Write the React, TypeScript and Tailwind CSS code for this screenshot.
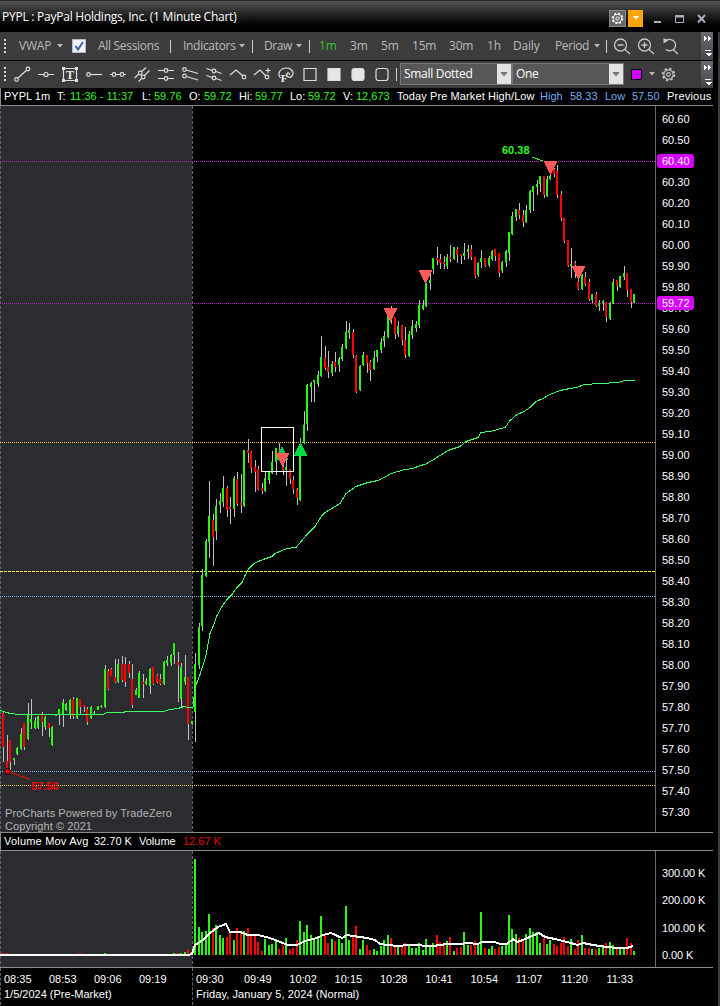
import type { ReactNode } from 'react';
import clsx from 'clsx';

// x, high, low, body top, body bottom, direction, volume height
type Bar = [number, number, number, number, number, 'u' | 'd', number];

const preMarket: Bar[] = [
  [2, 712, 762, 713, 747, 'd', 2], [6, 735, 772, 761, 769, 'd', 2], [9, 740, 770, 740, 762, 'd', 0],
  [13, 758, 765, 758, 760, 'u', 0], [16, 747, 755, 748, 754, 'u', 0], [20, 728, 750, 734, 749, 'u', 0],
  [23, 723, 750, 723, 747, 'd', 0], [27, 703, 740, 715, 739, 'u', 0], [30, 699, 729, 719, 722, 'u', 0],
  [34, 717, 729, 721, 728, 'u', 0], [37, 716, 729, 716, 728, 'u', 0], [41, 712, 736, 715, 722, 'd', 0],
  [44, 716, 730, 717, 727, 'u', 0], [48, 723, 737, 723, 728, 'd', 0], [51, 726, 746, 727, 745, 'u', 0],
  [55, 715, 716, 715, 716, 'u', 0], [58, 709, 725, 709, 715, 'u', 0], [62, 699, 727, 702, 715, 'u', 0],
  [65, 703, 711, 704, 710, 'u', 0], [69, 699, 719, 700, 714, 'u', 0], [72, 697, 719, 699, 716, 'd', 0],
  [76, 698, 719, 698, 718, 'u', 0], [79, 699, 715, 699, 707, 'd', 2], [83, 705, 712, 705, 707, 'd', 0],
  [86, 707, 725, 709, 722, 'd', 0], [90, 706, 719, 707, 718, 'u', 0], [93, 711, 714, 712, 713, 'u', 0],
  [97, 706, 710, 706, 710, 'u', 0], [100, 705, 708, 706, 707, 'u', 0], [104, 665, 708, 669, 707, 'u', 2],
  [107, 669, 690, 671, 689, 'd', 0], [110, 668, 676, 669, 676, 'd', 0], [114, 659, 683, 677, 682, 'd', 0],
  [117, 659, 683, 664, 682, 'u', 0], [121, 656, 682, 664, 680, 'd', 0], [124, 657, 687, 664, 682, 'd', 0],
  [128, 661, 678, 664, 673, 'd', 0], [131, 664, 708, 679, 705, 'd', 0], [135, 688, 695, 690, 695, 'u', 0],
  [138, 671, 698, 673, 698, 'u', 0], [142, 674, 698, 682, 684, 'd', 0], [145, 678, 685, 681, 684, 'u', 0],
  [149, 668, 694, 669, 686, 'u', 0], [152, 667, 685, 667, 684, 'd', 0], [156, 674, 683, 675, 682, 'd', 0],
  [159, 674, 685, 679, 684, 'd', 0], [163, 661, 685, 662, 684, 'u', 0], [166, 656, 666, 660, 663, 'u', 0],
  [170, 654, 666, 655, 663, 'u', 0], [173, 643, 664, 643, 655, 'u', 2], [177, 652, 702, 662, 665, 'd', 2],
  [180, 663, 707, 667, 699, 'u', 2], [184, 655, 685, 677, 682, 'u', 3], [187, 677, 740, 677, 724, 'd', 6],
  [191, 721, 725, 721, 724, 'u', 0],
];

const regular: Bar[] = [
  [194, 653, 742, 664, 712, 'u', 96], [198, 623, 669, 627, 665, 'u', 28], [201, 569, 631, 575, 626, 'u', 23],
  [205, 539, 577, 541, 576, 'u', 24], [208, 481, 558, 516, 542, 'u', 41], [212, 514, 566, 520, 537, 'd', 27],
  [215, 499, 540, 506, 531, 'u', 30], [219, 493, 513, 501, 505, 'u', 20], [222, 476, 507, 488, 502, 'u', 17],
  [226, 486, 517, 488, 510, 'd', 18], [229, 497, 524, 507, 509, 'd', 22], [233, 476, 517, 478, 509, 'u', 15],
  [236, 472, 506, 479, 504, 'd', 27], [240, 474, 513, 503, 505, 'd', 23], [243, 450, 507, 450, 506, 'u', 24],
  [247, 439, 463, 450, 453, 'd', 27], [250, 451, 473, 452, 468, 'd', 19], [254, 460, 492, 467, 472, 'd', 20],
  [257, 466, 490, 469, 489, 'd', 13], [261, 483, 494, 488, 491, 'd', 4], [264, 472, 492, 478, 491, 'u', 16],
  [268, 472, 484, 472, 480, 'u', 10], [271, 451, 474, 462, 473, 'u', 11], [275, 448, 475, 448, 462, 'u', 16],
  [278, 443, 453, 450, 453, 'd', 6], [282, 450, 475, 467, 470, 'd', 10], [285, 460, 486, 467, 470, 'u', 17],
  [289, 469, 484, 469, 479, 'd', 6], [292, 476, 494, 480, 489, 'd', 7], [296, 488, 505, 489, 498, 'd', 15],
  [299, 438, 501, 455, 500, 'u', 34], [303, 411, 444, 425, 443, 'u', 23], [306, 384, 431, 385, 424, 'u', 30],
  [310, 382, 402, 383, 387, 'u', 20], [313, 380, 402, 380, 382, 'u', 16], [317, 371, 387, 375, 384, 'u', 19],
  [320, 336, 377, 357, 376, 'u', 39], [324, 346, 370, 358, 368, 'd', 20], [327, 351, 378, 367, 372, 'd', 12],
  [331, 361, 376, 364, 373, 'u', 16], [334, 352, 372, 362, 367, 'd', 14], [338, 357, 372, 359, 365, 'u', 16],
  [341, 344, 361, 347, 359, 'u', 12], [345, 321, 349, 332, 348, 'u', 49], [348, 323, 339, 330, 333, 'u', 15],
  [352, 329, 358, 332, 355, 'd', 18], [355, 355, 393, 356, 392, 'd', 29], [359, 365, 391, 366, 390, 'u', 6],
  [362, 352, 366, 355, 365, 'u', 15], [366, 355, 373, 355, 363, 'd', 10], [369, 360, 381, 362, 370, 'd', 5],
  [373, 351, 370, 358, 369, 'u', 6], [376, 350, 362, 350, 357, 'u', 4], [380, 338, 353, 342, 350, 'u', 9],
  [383, 331, 347, 336, 341, 'u', 15], [387, 315, 338, 316, 337, 'u', 20], [390, 306, 324, 310, 316, 'd', 17],
  [394, 317, 339, 317, 334, 'd', 9], [397, 321, 337, 326, 334, 'u', 9], [401, 325, 345, 325, 340, 'd', 8],
  [404, 327, 358, 340, 355, 'd', 12], [408, 331, 357, 334, 356, 'u', 9], [411, 320, 339, 326, 335, 'u', 7],
  [415, 321, 332, 324, 328, 'u', 7], [418, 300, 328, 305, 325, 'u', 12], [422, 300, 310, 305, 309, 'u', 5],
  [425, 283, 307, 284, 306, 'u', 16], [429, 272, 290, 280, 283, 'u', 8], [432, 258, 274, 258, 269, 'u', 12],
  [436, 247, 265, 258, 260, 'd', 20], [439, 254, 269, 259, 263, 'd', 13], [443, 256, 269, 262, 264, 'd', 11],
  [446, 254, 269, 257, 266, 'u', 14], [449, 245, 262, 257, 259, 'd', 18], [453, 247, 260, 247, 259, 'u', 4],
  [456, 247, 263, 249, 255, 'd', 7], [460, 254, 264, 254, 256, 'd', 8], [463, 243, 260, 253, 256, 'u', 23],
  [467, 245, 259, 249, 252, 'u', 10], [470, 245, 260, 249, 257, 'd', 10], [474, 257, 278, 257, 276, 'd', 14],
  [477, 262, 277, 263, 275, 'u', 11], [480, 250, 268, 258, 262, 'u', 43], [484, 258, 267, 258, 266, 'd', 7],
  [488, 256, 267, 258, 265, 'u', 6], [491, 250, 261, 251, 259, 'u', 9], [494, 249, 261, 249, 256, 'd', 6],
  [498, 253, 277, 253, 273, 'd', 8], [501, 261, 273, 262, 271, 'u', 9], [505, 250, 267, 251, 262, 'u', 11],
  [508, 232, 261, 232, 253, 'u', 40], [511, 212, 235, 216, 234, 'u', 26], [515, 209, 221, 209, 217, 'u', 21],
  [518, 203, 219, 210, 215, 'd', 17], [522, 210, 227, 215, 222, 'd', 16], [525, 205, 223, 210, 222, 'u', 21],
  [529, 190, 213, 191, 210, 'u', 27], [532, 186, 211, 186, 192, 'u', 23], [536, 180, 195, 184, 187, 'u', 23],
  [539, 176, 192, 176, 184, 'u', 12], [543, 176, 198, 176, 195, 'd', 17], [546, 176, 197, 179, 196, 'u', 11],
  [549, 170, 180, 176, 179, 'u', 15], [553, 168, 177, 169, 174, 'd', 11], [556, 165, 198, 171, 195, 'd', 9],
  [560, 191, 221, 194, 218, 'd', 12], [563, 218, 243, 218, 241, 'd', 18], [567, 240, 267, 240, 266, 'd', 9],
  [570, 248, 278, 264, 266, 'u', 16], [574, 261, 278, 263, 265, 'd', 6], [577, 277, 290, 281, 289, 'd', 15],
  [581, 274, 290, 275, 289, 'u', 20], [584, 272, 286, 277, 284, 'd', 7], [588, 279, 301, 282, 299, 'd', 7],
  [591, 294, 303, 294, 300, 'u', 6], [595, 292, 307, 294, 306, 'd', 6], [598, 300, 311, 303, 306, 'u', 7],
  [602, 300, 311, 301, 303, 'u', 9], [605, 302, 322, 302, 317, 'd', 12], [609, 302, 320, 303, 319, 'u', 13],
  [612, 279, 304, 282, 303, 'u', 10], [616, 280, 291, 280, 286, 'd', 7], [619, 276, 288, 276, 287, 'u', 6],
  [623, 266, 280, 273, 277, 'u', 6], [626, 273, 297, 273, 290, 'd', 17], [630, 289, 308, 289, 302, 'd', 12],
  [633, 294, 303, 294, 303, 'u', 4],
];

const bars = [...preMarket, ...regular];

const vwap =
  '0,710 7,712 10,713 20,714 103,714 107,712 123,712 126,711 163,711 170,709 178,708 184,706 188,707 193,707 195,687 197,682 200,674 206,655 210,633 213,626 217,615 222,606 227,599 232,594 237,587 242,582 245,575 249,568 254,563 263,559 272,556 275,553 287,548 296,547 307,534 315,526 322,515 325,512 340,503 346,493 356,486 368,482 378,480 386,476 391,473 405,469 413,468 420,465 425,464 432,460 440,455 448,450 460,446 466,441 478,437 481,432 490,431 505,427 510,420 517,414 524,411 530,407 536,401 543,398 550,394 560,390 570,388 577,387 584,384 600,383 618,382 625,380 635,380';

const volumeAverage =
  '0,955 188,955 192,954 195,945 203,940 210,933 218,927 226,924 230,932 240,932 248,935 258,935 270,938 280,942 288,945 297,945 305,941 317,938 323,935 331,933 342,938 347,935 353,936 367,938 375,940 380,944 397,946 410,945 433,946 447,944 460,944 467,943 478,944 482,942 495,942 500,944 507,944 513,939 517,942 523,940 532,936 539,933 545,937 555,939 567,942 578,945 583,943 593,945 607,947 617,948 627,948 633,946';

const prices = Array.from({ length: 34 }, (_, i) => (60.6 - i * 0.1).toFixed(2));

const sells = [[276, 453], [384, 308], [419, 270], [544, 161], [572, 266]];

function Arrow({ className }: { className?: string }) {
  return (
    <svg width="6" height="4" viewBox="0 0 6 4" className={clsx('shrink-0', className)}>
      <path d="M0 0h6L3 3.5z" fill="currentColor" />
    </svg>
  );
}

function Grip() {
  return (
    <div className="flex w-[10px] shrink-0 flex-col items-center gap-[2px]">
      {[0, 1, 2, 3].map((i) => (
        <i key={i} className="h-[2px] w-[2px] bg-[#d8d8d8]" />
      ))}
    </div>
  );
}

function Divider({ className }: { className?: string }) {
  return <i className={clsx('h-[13px] w-px shrink-0 bg-[#d0d0d0]', className)} />;
}

function Overflow() {
  return (
    <div className="ml-auto h-full w-[12px] shrink-0 bg-gradient-to-b from-[#686b70] to-[#44474c]">
      <svg width="12" height="28" viewBox="0 0 12 28" fill="none" shapeRendering="crispEdges">
        <path d="M3 4l3 2.5L3 9zM7 4l3 2.5L7 9z" fill="#fff" />
        <path d="M4 18.500h6" stroke="#fff" />
        <path d="M4 21h7l-3.500 3.500z" fill="#fff" />
      </svg>
    </div>
  );
}

function Tool({ children }: { children: ReactNode }) {
  return (
    <svg width="24" height="24" viewBox="0 0 24 24" fill="none" stroke="#dedede" strokeWidth="1.200" className="shrink-0">
      {children}
    </svg>
  );
}

function DrawTools() {
  return (
    <>
      <Tool>
        <circle cx="6.500" cy="17.500" r="1.800" />
        <circle cx="18" cy="7" r="1.800" />
        <path d="M8 16L16.500 8.300" />
      </Tool>
      <Tool>
        <circle cx="12" cy="12.500" r="2" />
        <path d="M4 12.500h6M14 12.500h6" />
      </Tool>
      <Tool>
        <path d="M5.500 6.500h13v12h-13z" />
        <path d="M4 5h3v3H4zM17 5h3v3h-3zM4 17h3v3H4zM17 17h3v3h-3z" fill="#dedede" stroke="none" />
        <text x="12" y="17" textAnchor="middle" fill="#eee" stroke="none" className="font-['Liberation_Serif'] text-[12px] font-bold">
          T
        </text>
      </Tool>
      <Tool>
        <circle cx="6.500" cy="12.500" r="1.800" />
        <path d="M8.500 12.500H20" />
      </Tool>
      <Tool>
        <circle cx="8" cy="12.500" r="1.800" />
        <circle cx="16" cy="12.500" r="1.800" />
        <path d="M4 12.500h2M10 12.500h4M18 12.500h2" />
      </Tool>
      <Tool>
        <path d="M4.500 16L9 12M11.500 9.500L16 5.500M8.500 19.500L12 16M14.500 13.500L19.500 8.500" />
        <circle cx="10.200" cy="11" r="1.800" />
        <circle cx="13.200" cy="15" r="1.800" />
      </Tool>
      <Tool>
        <circle cx="12" cy="8.500" r="1.800" />
        <circle cx="12" cy="16.500" r="1.800" />
        <path d="M4 8.500h6M14 8.500h6M4 16.500h6M14 16.500h6" />
      </Tool>
      <Tool>
        <circle cx="6.500" cy="7.500" r="1.800" />
        <circle cx="6.500" cy="14" r="1.800" />
        <path d="M8.500 8L20 11.500M8.500 14.500L20 18" />
      </Tool>
      <Tool>
        <circle cx="12" cy="9" r="1.800" />
        <circle cx="12" cy="16" r="1.800" />
        <path d="M4.500 6.500L10 8.500M14 9.500L19.500 11.500M4.500 13.500L10 15.500M14 16.500L19.500 18.500" />
      </Tool>
      <Tool>
        <path d="M4 13L10 8L17 14" />
        <circle cx="18" cy="15" r="1.800" />
      </Tool>
      <Tool>
        <path d="M4 13L10 8L16 14M18 6v5M15.500 8.500h5" />
        <circle cx="17" cy="15" r="1.800" />
      </Tool>
      <Tool>
        <path d="M6.500 16C2.500 11 7 6 12.500 6C18 6 20.500 11 18 14C15 17 11.500 14 13 11.500C14.500 10 16.500 11.500 15.500 13" />
        <text x="10" y="19.500" textAnchor="middle" fill="#eee" stroke="none" className="font-['Liberation_Serif'] text-[11px] font-bold">
          F
        </text>
      </Tool>
      <Tool>
        <path d="M6 6.500h12v12H6z" />
      </Tool>
      <Tool>
        <path d="M6 6.500h12v12H6z" fill="#e6e6e8" />
      </Tool>
      <Tool>
        <rect x="6" y="6.500" width="12" height="12" rx="2.500" fill="#e6e6e8" />
      </Tool>
      <Tool>
        <rect x="6" y="6.500" width="12" height="12" rx="2.500" />
      </Tool>
    </>
  );
}

function Gear({ size }: { size: number }) {
  return (
    <svg width={size} height={size} viewBox="0 0 16 16" fill="none" stroke="currentColor" className="shrink-0">
      <circle cx="8" cy="8" r="5" strokeWidth="1.200" />
      <circle cx="8" cy="8" r="6.300" strokeWidth="1.800" strokeDasharray="2.470 2.470" />
      <circle cx="8" cy="8" r="2" strokeWidth="1.200" />
    </svg>
  );
}

function TitleBar() {
  return (
    <div className="flex h-[32px] shrink-0 items-center border-t border-[#262626] bg-gradient-to-b from-[#565656] to-black pl-[2px] text-white">
      <span className="w-[607px] shrink-0 pt-px text-[12px] tracking-[-0.240px] whitespace-nowrap">
        PYPL : PayPal Holdings, Inc. (1 Minute Chart)
      </span>
      <div className="mt-[3px] flex items-center text-[#a9b0bb]">
        <span className="flex h-[17px] w-[17px] items-center justify-center border border-[#8a8a8a] bg-[#666] text-white">
          <Gear size={13} />
        </span>
        <span className="ml-[2px] flex h-[17px] w-[15px] items-center justify-center bg-[#ffa50a] text-white">
          <Arrow />
        </span>
        <svg width="56" height="14" viewBox="0 0 56 14" className="ml-[10px]" fill="none" stroke="currentColor">
          <path d="M1 11h7" strokeWidth="2" />
          <path d="M22.500 4.500h8v7h-8z" />
          <path d="M22 5.500h9" strokeWidth="2" />
          <path d="M45 4l7 7.500M52 4l-7 7.500" strokeWidth="2" />
        </svg>
      </div>
    </div>
  );
}

function MainToolbar() {
  return (
    <div className="flex h-[28px] shrink-0 items-center bg-[#3c3c3c] text-[12px] tracking-[-0.200px] whitespace-nowrap text-[#bababa]">
      <Grip />
      <span className="ml-[9px] w-[38px]">VWAP</span>
      <Arrow />
      <svg width="14" height="14" viewBox="0 0 14 14" className="ml-[9px] shrink-0">
        <path d="M.5.5h13v13H.5z" fill="#eef3fa" stroke="#aebfd4" />
        <path d="M3.500 7L6 10.500L11 3" fill="none" stroke="#3f629c" strokeWidth="2" />
      </svg>
      <span className="ml-[12px] w-[72px] tracking-[-0.300px]">All Sessions</span>
      <Divider />
      <span className="ml-[12px] w-[56px] tracking-[-0.300px]">Indicators</span>
      <Arrow />
      <Divider className="ml-[7px]" />
      <span className="ml-[11px] w-[32px] tracking-[-0.400px]">Draw</span>
      <Arrow />
      <Divider className="ml-[7px]" />
      <span className="ml-[9px] w-[31px] text-[#35c435]">1m</span>
      <span className="w-[31px]">3m</span>
      <span className="w-[31px]">5m</span>
      <span className="w-[37px]">15m</span>
      <span className="w-[38px]">30m</span>
      <span className="w-[26px]">1h</span>
      <span className="w-[42px]">Daily</span>
      <span className="w-[39px] tracking-[-0.400px]">Period</span>
      <Arrow />
      <Divider className="ml-[6px]" />
      <svg width="72" height="24" viewBox="0 0 72 24" className="ml-[4px] shrink-0" fill="none" stroke="#c6c6c6" strokeWidth="1.300">
        <circle cx="9.500" cy="11" r="6" />
        <path d="M14 15.500l5 4.500M6.500 11h6" />
        <circle cx="33.500" cy="11" r="6" />
        <path d="M38 15.500l5 4.500M30.500 11h6M33.500 8v6" />
        <path d="M54 7C57.500 4 64.500 5.500 64.500 11C64.500 16.500 58 18 55 15.500M62 15.500l5 4.500" />
        <path d="M52.500 4v5.500l5-3z" fill="#c6c6c6" stroke="none" />
      </svg>
      <Overflow />
    </div>
  );
}

function Select({ label }: { label: string }) {
  return (
    <div className="flex h-[22px] w-[112px] shrink-0 border border-[#777] bg-[#575757] text-white">
      <span className="flex-1 pl-[3px] text-[12px] leading-[19px] tracking-[-0.300px]">{label}</span>
      <span className="flex w-[14px] items-center justify-center bg-[#e4e4e4] text-[#777]">
        <Arrow className="h-[5px] w-[8px]" />
      </span>
    </div>
  );
}

function DrawToolbar() {
  return (
    <div className="mt-px flex h-[27px] shrink-0 items-center bg-[#3c3c3c] pb-px">
      <Grip />
      <DrawTools />
      <Divider className="ml-[2px] mr-[3px]" />
      <Select label="Small Dotted" />
      <Select label="One" />
      <i className="ml-[7px] h-[11px] w-[11px] shrink-0 border border-black bg-[#d400ff]" />
      <Arrow className="mr-[6px] ml-[7px] text-[#bababa]" />
      <span className="mt-px text-[#c6c6c6]">
        <Gear size={15} />
      </span>
      <Overflow />
    </div>
  );
}

function Quote({ label, value, labelWidth, valueWidth }: { label: string; value: string; labelWidth: string; valueWidth: string }) {
  return (
    <>
      <span className={clsx('shrink-0', labelWidth)}>{label}</span>
      <span className={clsx('shrink-0 text-[#2cf81c]', valueWidth)}>{value}</span>
    </>
  );
}

function QuoteBar() {
  return (
    <div className="flex h-[18px] shrink-0 items-center overflow-hidden border-b border-l border-[#8c8c8c] pl-[3px] text-[11px] whitespace-nowrap">
      <span className="w-[53px] shrink-0">PYPL 1m</span>
      <Quote label="T:" value="11:36 - 11:37" labelWidth="w-[13px]" valueWidth="w-[72px]" />
      <Quote label="L:" value="59.76" labelWidth="w-[12px]" valueWidth="w-[35px]" />
      <Quote label="O:" value="59.72" labelWidth="w-[15px]" valueWidth="w-[35px]" />
      <Quote label="Hi:" value="59.77" labelWidth="w-[16px]" valueWidth="w-[35px]" />
      <Quote label="Lo:" value="59.72" labelWidth="w-[18px]" valueWidth="w-[35px]" />
      <Quote label="V:" value="12,673" labelWidth="w-[13px]" valueWidth="w-[41px]" />
      <span className="w-[143px] shrink-0 tracking-[0.100px]">Today Pre Market High/Low</span>
      <span className="w-[30px] shrink-0 text-[#72aef0]">High</span>
      <span className="w-[35px] shrink-0 text-[#72aef0]">58.33</span>
      <span className="w-[27px] shrink-0 text-[#72aef0]">Low</span>
      <span className="w-[35px] shrink-0 text-[#72aef0]">57.50</span>
      <span className="tracking-[0.200px]">Previous</span>
    </div>
  );
}

function Level({ y, color, dash = '1 1' }: { y: number; color: string; dash?: string }) {
  return <path d={`M0 ${y + 0.5}H655`} stroke={color} strokeDasharray={dash} />;
}

function PriceChart() {
  return (
    <svg width="655" height="726" viewBox="0 106 655 726" fill="none" shapeRendering="crispEdges" className="block">
      <path d="M0 106h192v726H0z" fill="#2b2c30" />
      <path d="M.5 106v726M192.500 106v726" stroke="#66666a" strokeDasharray="3 2" />
      <Level y={161} color="#b428cc" />
      <Level y={303} color="#b428cc" />
      <Level y={442} color="#ffc83c" />
      <Level y={571} color="#ffff38" dash="3 1" />
      <Level y={596} color="#78b8ff" />
      <Level y={771} color="#8cb8ea" />
      <Level y={785} color="#f0cc60" />
      {bars.map(([x, high, low, top, bottom, dir]) => (
        <g key={x}>
          <path d={`M${x + 1.5} ${high}V${low}`} stroke="#c0c0c0" />
          <rect x={x} y={top} width="2" height={bottom - top} fill={dir === 'u' ? '#26f80e' : '#ff0000'} />
        </g>
      ))}
      <polyline points={vwap} stroke="#3cff64" transform="translate(0 .5)" />
      <path d="M261.500 427.500h32v44h-32z" stroke="#fff" />
      <path d="M282 446l6.500 14h-13z" fill="#00c850" />
      <path d="M300.500 442l7 14h-14z" fill="#00dc46" />
      {sells.map(([x, y]) => (
        <path key={x} d={`M${x - 0.5} ${y}h14l-7 14z`} fill="#ff5a5a" />
      ))}
      <path d="M532 157l11 4" stroke="#2cf81c" />
      <path d="M8 771.500l22 8" stroke="red" />
      <circle cx="7.500" cy="771.500" r="2.800" fill="red" stroke="#000" shapeRendering="auto" />
      <text x="502" y="154" fill="#2cf81c" className="text-[11px] font-bold">
        60.38
      </text>
      <text x="31" y="790" fill="#ff0000" className="text-[11px] font-bold">
        57.50
      </text>
    </svg>
  );
}

function PriceAxis() {
  return (
    <div className="relative flex-1 border-l border-[#6a6a6a] pt-[3px] pl-[6px] text-[11px]">
      {prices.map((price) => (
        <div key={price} className="h-[21px] leading-[21px]">
          {price}
        </div>
      ))}
      <span className="absolute top-[48px] left-[1px] h-[14px] w-[37px] rounded-[3px] bg-[#d800ff] pl-[5px] leading-[14px]">60.40</span>
      <span className="absolute top-[190px] left-[1px] h-[14px] w-[37px] rounded-[3px] bg-[#d800ff] pl-[5px] leading-[14px]">59.72</span>
    </div>
  );
}

function VolumeChart() {
  return (
    <svg width="655" height="116" viewBox="0 851 655 116" fill="none" shapeRendering="crispEdges" className="block">
      <path d="M0 851h192v116H0z" fill="#2b2c30" />
      <path d="M.5 851v116M192.500 851v116" stroke="#66666a" strokeDasharray="3 2" />
      {bars.map(([x, , , , , dir, volume]) => (
        <rect key={x} x={x} y={955 - volume} width="2" height={volume} fill={dir === 'u' ? '#26f80e' : '#ff0000'} />
      ))}
      <polyline points={volumeAverage} stroke="#fff" strokeWidth="2" />
    </svg>
  );
}

function TimeAxis() {
  return (
    <div className="flex h-[38px] shrink-0 border-t border-[#8c8c8c] text-[11px] leading-[15px] whitespace-nowrap">
      <div className="w-[192px] shrink-0 border-l border-dashed border-[#66666a] pt-[4px] pl-[3px]">
        <div className="flex">
          {['08:35', '08:53', '09:06', '09:19'].map((time) => (
            <span key={time} className="w-[45px]">
              {time}
            </span>
          ))}
        </div>
        1/5/2024 (Pre-Market)
      </div>
      <div className="border-l border-dashed border-[#66666a] pt-[4px] pl-[3px]">
        <div className="flex">
          <span className="w-[48px]">09:30</span>
          {['09:49', '10:02', '10:15', '10:28', '10:41', '10:54', '11:07', '11:20', '11:33'].map((time) => (
            <span key={time} className="w-[45.300px]">
              {time}
            </span>
          ))}
        </div>
        <span className="tracking-[0.080px]">Friday, January 5, 2024 (Normal)</span>
      </div>
    </div>
  );
}

export default function App() {
  return (
    <div className="flex h-[1006px] w-[720px] flex-col overflow-hidden bg-black font-['Open_Sans','Noto_Sans',sans-serif]">
      <TitleBar />
      <div className="flex min-h-0 flex-1">
        <div className="flex w-[713px] shrink-0 flex-col">
          <MainToolbar />
          <DrawToolbar />
          <div className="flex min-h-0 flex-1 flex-col font-['Liberation_Sans',Arial,sans-serif] text-white">
            <QuoteBar />
            <div className="relative flex h-[727px] shrink-0 border-b border-[#8c8c8c]">
              <PriceChart />
              <PriceAxis />
              <p className="absolute -bottom-px left-[5px] text-[11px] leading-[13px] tracking-[0.080px] text-[#b4b4b4]">
                ProCharts Powered by TradeZero
                <br />
                Copyright © 2021
              </p>
            </div>
            <div className="flex h-[18px] shrink-0 items-center border-b border-l border-[#8c8c8c] pl-[3px] text-[11px] whitespace-nowrap">
              <span className="w-[90px] tracking-[0.200px]">Volume Mov Avg</span>
              <span className="w-[45px]">32.70 K</span>
              <span className="w-[44px]">Volume</span>
              <span className="text-[#e60000]">12.67 K</span>
            </div>
            <div className="flex h-[116px] shrink-0">
              <VolumeChart />
              <div className="flex-1 border-l border-[#6a6a6a] pt-[9px] pl-[6px] text-[11px]">
                {['300.00 K', '200.00 K', '100.00 K', '0.00 K'].map((volume) => (
                  <div key={volume} className="h-[27.300px] leading-[27px] tracking-[-0.100px]">
                    {volume}
                  </div>
                ))}
              </div>
            </div>
            <TimeAxis />
          </div>
        </div>
        <div className="ml-auto w-[2px] bg-[#3c3c3c]" />
      </div>
    </div>
  );
}
